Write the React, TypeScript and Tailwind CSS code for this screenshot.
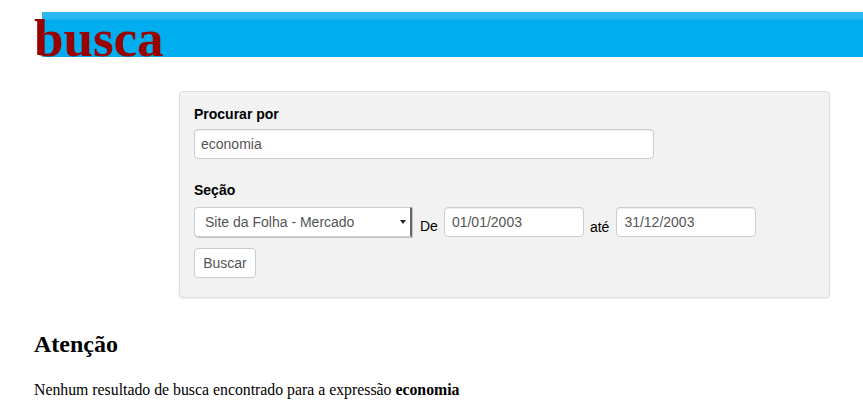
import React from "react";

const sans = { fontFamily: '"Liberation Sans", Arial, sans-serif' };

const App: React.FC = () => {
  return (
    <div className="min-h-[400px] bg-white text-black" style={{ fontFamily: '"Liberation Serif", "Times New Roman", serif' }}>
      {/* header */}
      <div className="relative h-[57px] pt-[12px]">
        <div className="ml-[42px] h-[45px] bg-[linear-gradient(to_bottom,#2ab8ef_0px,#2ab8ef_6px,#00adef_9px,#00adef_100%)]" />
        <h1 className="absolute left-[34px] top-[12px] text-[53px] font-bold leading-[53px] text-[#990000]">busca</h1>
      </div>

      {/* search form */}
      <div
        className="ml-[179px] mt-[34px] h-[207px] w-[651px] rounded-[4px] border border-[#dedede] bg-[#f2f2f2] px-[14px] pt-[12px] shadow-[0_1px_2px_rgba(0,0,0,0.08)]"
        style={sans}
      >
        <label className="block text-[14px] font-bold leading-[20px]">Procurar por</label>
        <div className="mt-[5px] flex h-[30px] w-[460px] items-center rounded-[4px] border border-[#cccccc] bg-white px-[6px] text-[14px] text-[#555] shadow-[inset_0_1px_1px_rgba(0,0,0,0.075)]">
          economia
        </div>

        <label className="mt-[21px] block text-[14px] font-bold leading-[20px]">Seção</label>
        <div className="mt-[6px] flex items-end">
          <div className="relative flex h-[30px] w-[218px] items-center rounded-l-[4px] border border-r-2 border-[#cccccc] border-r-[#666] bg-white pl-[10px] text-[14px] text-[#555] shadow-[1px_1px_1px_rgba(0,0,0,0.2)]">
            Site da Folha - Mercado
            <span className="absolute right-[4px] top-[12px] h-0 w-0 border-x-[3px] border-t-[4px] border-x-transparent border-t-[#222]" />
          </div>
          <span className="ml-[8px] mb-[1px] text-[14px] leading-[20px]">De</span>
          <div className="ml-[6px] mt-[1px] flex h-[30px] w-[140px] items-center self-start rounded-[4px] border border-[#cccccc] bg-white px-[7px] text-[14px] text-[#555] shadow-[inset_0_1px_1px_rgba(0,0,0,0.075)]">
            01/01/2003
          </div>
          <span className="ml-[6px] text-[14px] leading-[20px]">até</span>
          <div className="ml-[7px] mt-[1px] flex h-[30px] w-[140px] items-center self-start rounded-[4px] border border-[#cccccc] bg-white px-[7px] text-[14px] text-[#555] shadow-[inset_0_1px_1px_rgba(0,0,0,0.075)]">
            31/12/2003
          </div>
        </div>

        <button className="mt-[11px] flex h-[30px] w-[62px] items-center justify-center rounded-[4px] border border-[#cccccc] bg-white text-[14px] text-[#555]">
          Buscar
        </button>
      </div>

      {/* result */}
      <div className="px-[34px]">
        <h2 className="mt-[32px] text-[24px] font-bold leading-[28px]">Atenção</h2>
        <p className="mt-[22px] text-[15.8px] leading-[20px]">
          Nenhum resultado de busca encontrado para a expressão <b>economia</b>
        </p>
      </div>
    </div>
  );
};

export default App;
